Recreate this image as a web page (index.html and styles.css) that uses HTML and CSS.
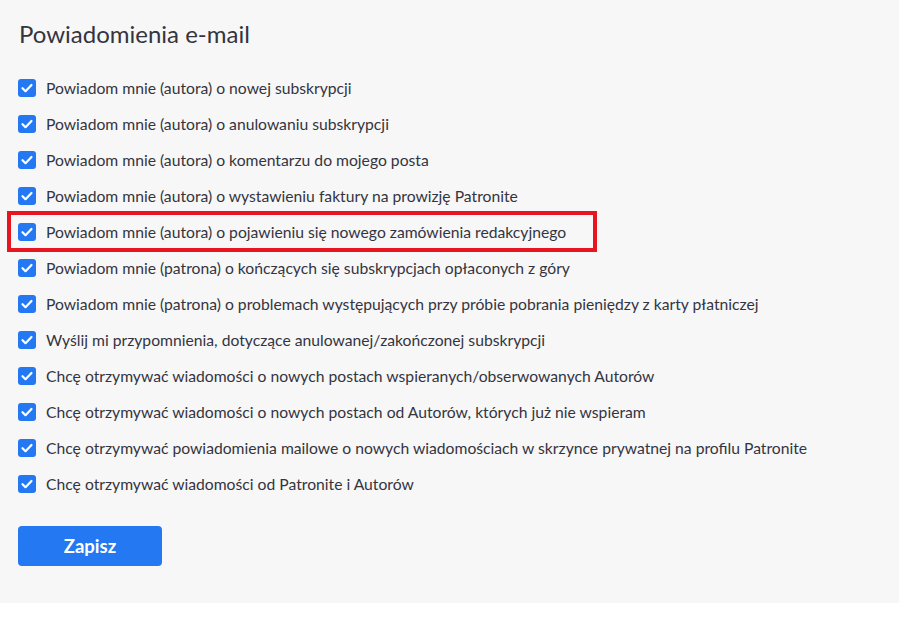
FILE: index.html
```html
<!DOCTYPE html>
<html lang="pl">
<head>
<meta charset="utf-8">
<link rel="stylesheet" href="styles.css">
</head>
<body>
<div class="panel">
  <h2 class="title">Powiadomienia e-mail</h2>
  <ul class="list">
    <li class="row"><span class="cb"><svg viewBox="0 0 18 18"><path d="M4.5 9.2l3 3 6-6.2"/></svg></span><span>Powiadom mnie (autora) o nowej subskrypcji</span></li>
    <li class="row"><span class="cb"><svg viewBox="0 0 18 18"><path d="M4.5 9.2l3 3 6-6.2"/></svg></span><span>Powiadom mnie (autora) o anulowaniu subskrypcji</span></li>
    <li class="row"><span class="cb"><svg viewBox="0 0 18 18"><path d="M4.5 9.2l3 3 6-6.2"/></svg></span><span>Powiadom mnie (autora) o komentarzu do mojego posta</span></li>
    <li class="row"><span class="cb"><svg viewBox="0 0 18 18"><path d="M4.5 9.2l3 3 6-6.2"/></svg></span><span>Powiadom mnie (autora) o wystawieniu faktury na prowizję Patronite</span></li>
    <li class="row highlight"><span class="cb"><svg viewBox="0 0 18 18"><path d="M4.5 9.2l3 3 6-6.2"/></svg></span><span>Powiadom mnie (autora) o pojawieniu się nowego zamówienia redakcyjnego</span></li>
    <li class="row"><span class="cb"><svg viewBox="0 0 18 18"><path d="M4.5 9.2l3 3 6-6.2"/></svg></span><span>Powiadom mnie (patrona) o kończących się subskrypcjach opłaconych z góry</span></li>
    <li class="row"><span class="cb"><svg viewBox="0 0 18 18"><path d="M4.5 9.2l3 3 6-6.2"/></svg></span><span>Powiadom mnie (patrona) o problemach występujących przy próbie pobrania pieniędzy z karty płatniczej</span></li>
    <li class="row"><span class="cb"><svg viewBox="0 0 18 18"><path d="M4.5 9.2l3 3 6-6.2"/></svg></span><span>Wyślij mi przypomnienia, dotyczące anulowanej/zakończonej subskrypcji</span></li>
    <li class="row"><span class="cb"><svg viewBox="0 0 18 18"><path d="M4.5 9.2l3 3 6-6.2"/></svg></span><span>Chcę otrzymywać wiadomości o nowych postach wspieranych/obserwowanych Autorów</span></li>
    <li class="row"><span class="cb"><svg viewBox="0 0 18 18"><path d="M4.5 9.2l3 3 6-6.2"/></svg></span><span>Chcę otrzymywać wiadomości o nowych postach od Autorów, których już nie wspieram</span></li>
    <li class="row"><span class="cb"><svg viewBox="0 0 18 18"><path d="M4.5 9.2l3 3 6-6.2"/></svg></span><span>Chcę otrzymywać powiadomienia mailowe o nowych wiadomościach w skrzynce prywatnej na profilu Patronite</span></li>
    <li class="row"><span class="cb"><svg viewBox="0 0 18 18"><path d="M4.5 9.2l3 3 6-6.2"/></svg></span><span>Chcę otrzymywać wiadomości od Patronite i Autorów</span></li>
  </ul>
  <button class="save">Zapisz</button>
</div>
</body>
</html>
```
FILE: styles.css
```css
html, body {
  margin: 0;
  padding: 0;
  background: #ffffff;
}
body {
  font-family: Lato, "Noto Sans", sans-serif;
  color: #34343f;
}
.panel {
  background: #f7f7f7;
  height: 603px;
  box-sizing: border-box;
  padding: 18px 18px 0 18px;
}
.title {
  margin: 0 0 0 1px;
  font-size: 24px;
  font-weight: 400;
  line-height: 32px;
  color: #34343f;
}
.list {
  list-style: none;
  margin: 20px 0 0 0;
  padding: 0;
}
.row {
  display: flex;
  align-items: center;
  gap: 10px;
  height: 36px;
  font-size: 15.7px;
  position: relative;
}
.highlight::before {
  content: "";
  position: absolute;
  left: -11px;
  top: -3px;
  width: 582px;
  height: 33px;
  border: 4px solid #e8141f;
}
.cb {
  width: 18px;
  height: 18px;
  border-radius: 3px;
  background: #2479f2;
  flex: 0 0 18px;
  display: flex;
}
.cb svg {
  width: 18px;
  height: 18px;
  fill: none;
  stroke: #ffffff;
  stroke-width: 2.2;
  stroke-linecap: round;
  stroke-linejoin: round;
}
.save {
  margin-top: 24px;
  width: 144px;
  height: 40px;
  border: none;
  border-radius: 4px;
  background: #2479f2;
  color: #ffffff;
  font-family: Lato, "Noto Sans", sans-serif;
  font-weight: 700;
  font-size: 18.5px;
}
```
